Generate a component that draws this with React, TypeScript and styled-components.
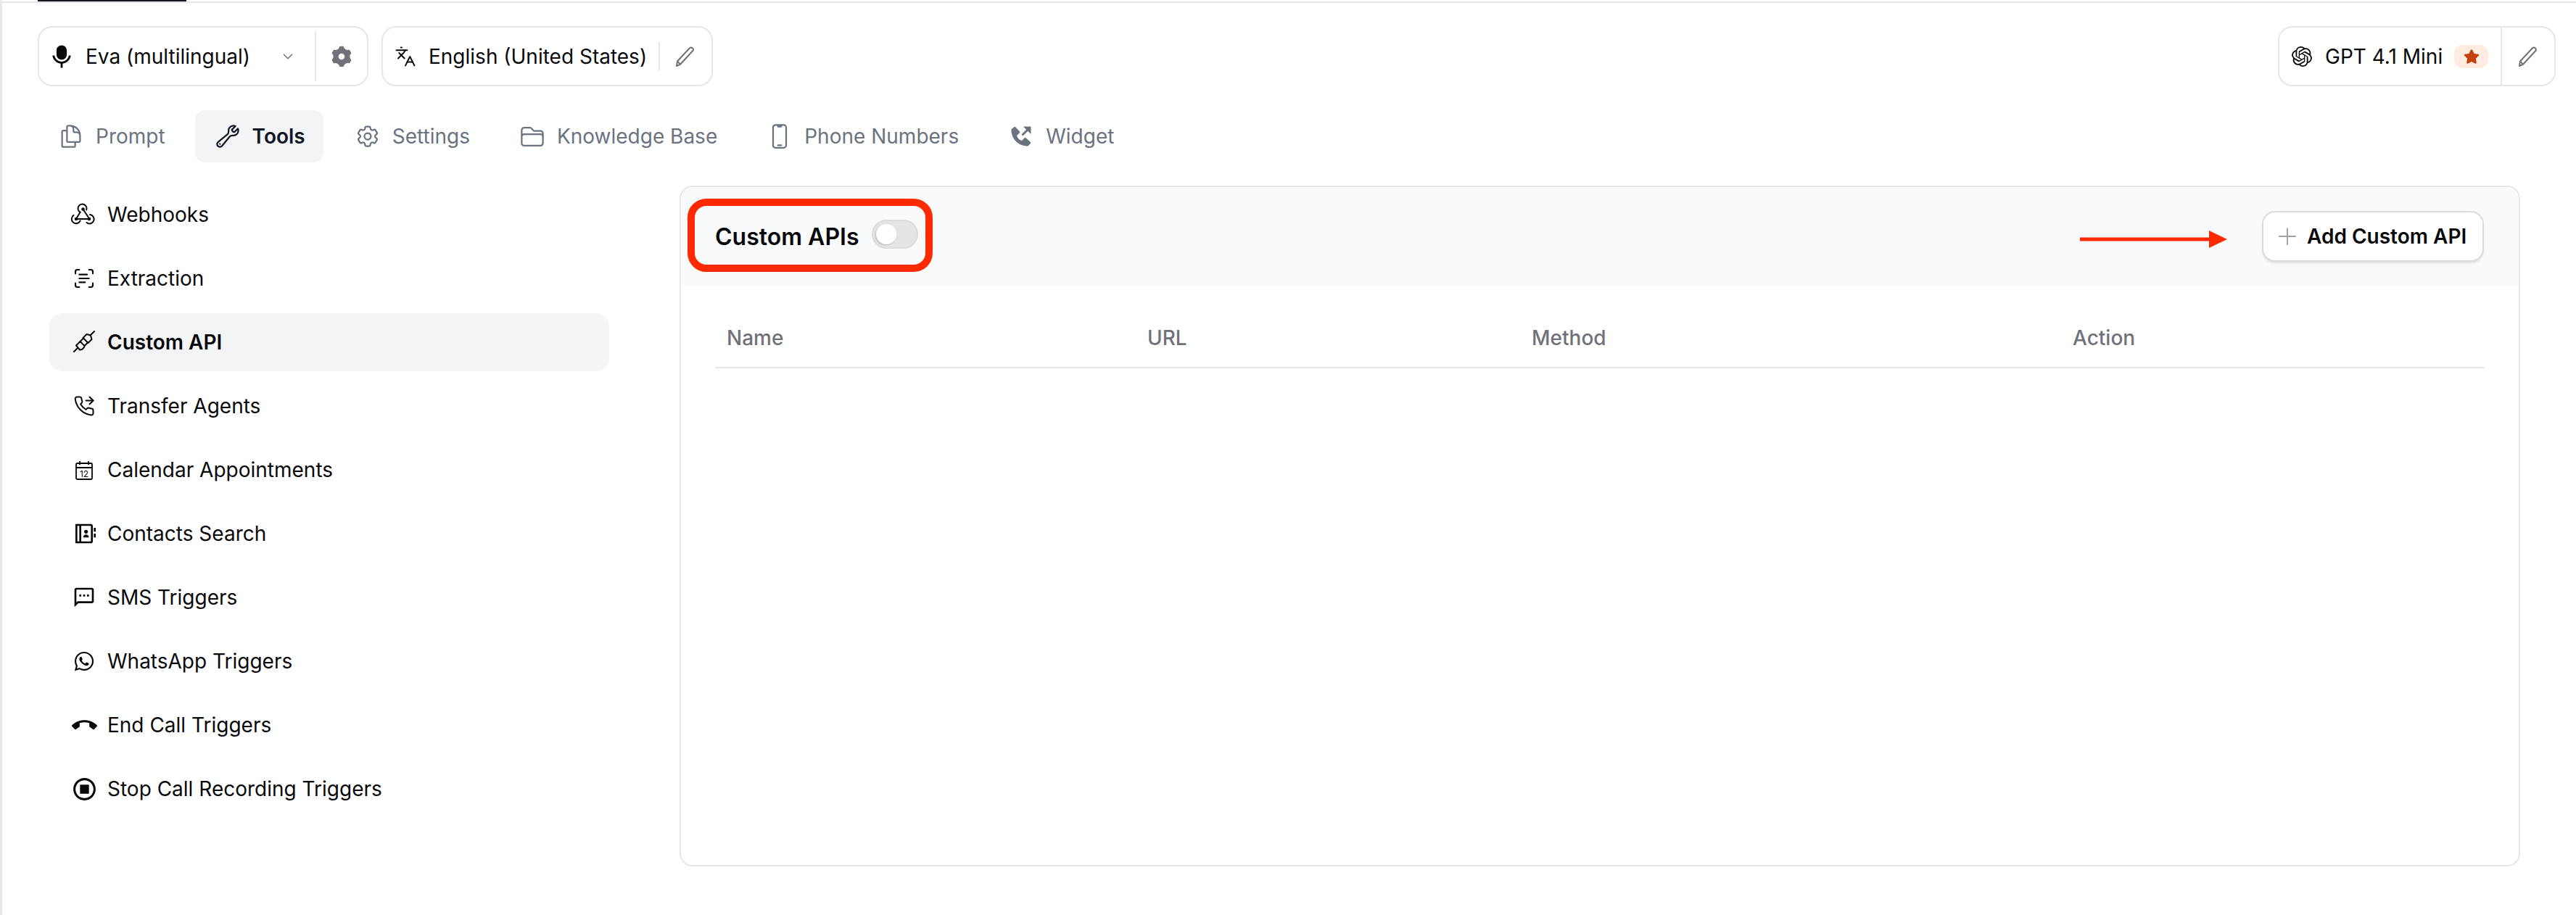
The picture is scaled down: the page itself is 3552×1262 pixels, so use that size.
import React from "react";
import styled, { createGlobalStyle } from "styled-components";
import { BiSolidPhoneOutgoing } from "react-icons/bi";
import { FaStar, FaWhatsapp } from "react-icons/fa";
import {
  HiOutlineCog6Tooth,
  HiOutlineDevicePhoneMobile,
  HiOutlineDocumentDuplicate,
  HiOutlineFolder,
  HiOutlineWrench,
} from "react-icons/hi2";
import { LuChevronDown, LuLanguages, LuPhoneForwarded, LuPlus, LuScanText } from "react-icons/lu";
import { MdCallEnd, MdOutlineSms, MdOutlineStopCircle } from "react-icons/md";
import { RiContactsBookLine, RiMicFill, RiSettings3Fill } from "react-icons/ri";
import { SiOpenai } from "react-icons/si";

const GlobalStyle = createGlobalStyle`
  html, body {
    margin: 0;
    background: #fff;
    overflow: hidden;
  }
  * {
    box-sizing: border-box;
  }
`;

const Page = styled.div`
  width: 3552px;
  height: 1262px;
  border-left: 3px solid #e8e8ec;
  font-family: Inter, "Liberation Sans", sans-serif;
  font-size: 28px;
  color: #09090b;
  background: #fff;
`;

const TopRule = styled.div`
  height: 4px;
  border-bottom: 2px solid #e6e6ee;
`;

const TopRuleMark = styled.div`
  margin-left: 49px;
  width: 205px;
  height: 2px;
  background: #18181b;
`;

const Toolbar = styled.div`
  display: flex;
  gap: 18px;
  height: 83px;
  margin-top: 32px;
  padding: 0 28px 0 49px;
`;

const Pill = styled.div<{ $width: number; $push?: boolean }>`
  display: flex;
  align-items: center;
  width: ${(p) => p.$width}px;
  height: 83px;
  margin-left: ${(p) => (p.$push ? "auto" : "0")};
  border: 2px solid #e7e7eb;
  border-radius: 20px;
`;

const PillIcon = styled.span<{ $left: number; $gap: number; $size: number }>`
  display: flex;
  flex: none;
  margin-left: ${(p) => p.$left}px;
  margin-right: ${(p) => p.$gap}px;
  font-size: ${(p) => p.$size}px;
  color: #09090b;
`;

const PillText = styled.span`
  flex: none;
  line-height: 34px;
  white-space: nowrap;
`;

const PillChevron = styled.span`
  display: flex;
  margin-left: auto;
  margin-right: 26px;
  font-size: 22px;
  color: #71717a;
`;

const PillDivider = styled.span<{ $inset: number; $left?: number }>`
  flex: none;
  align-self: stretch;
  width: 2px;
  margin: ${(p) => p.$inset}px 0;
  margin-left: ${(p) => p.$left ?? 0}px;
  background: #e7e7eb;
`;

const PillAction = styled.span<{ $width: number; $size: number }>`
  display: flex;
  flex: none;
  align-items: center;
  justify-content: center;
  width: ${(p) => p.$width}px;
  color: #71717a;
  font-size: ${(p) => p.$size}px;
`;

const StarBadge = styled.span`
  display: flex;
  align-items: center;
  justify-content: center;
  flex: none;
  width: 47px;
  height: 32px;
  margin-left: 16px;
  border-radius: 12px;
  background: #ffebe0;
  color: #c2410c;
  font-size: 22px;
`;

const Tabs = styled.nav`
  display: flex;
  gap: 16px;
  height: 72px;
  margin-top: 33px;
  padding-left: 50px;
`;

const Tab = styled.div<{ $active?: boolean }>`
  display: flex;
  align-items: center;
  gap: 16px;
  padding: 0 25px 0 27px;
  border-radius: 14px;
  background: ${(p) => (p.$active ? "#f3f4f6" : "transparent")};
  color: ${(p) => (p.$active ? "#111827" : "#6b7280")};
  font-weight: ${(p) => (p.$active ? 600 : 400)};
  white-space: nowrap;
`;

const TabIcon = styled.span<{ $size: number }>`
  display: flex;
  align-items: center;
  justify-content: center;
  width: 36px;
  font-size: ${(p) => p.$size}px;
`;

const Main = styled.div`
  display: flex;
  gap: 97px;
  margin-top: 32px;
  padding-left: 65px;
`;

const Sidebar = styled.aside`
  display: flex;
  flex-direction: column;
  gap: 8px;
  width: 772px;
`;

const SideItem = styled.div<{ $active?: boolean }>`
  display: flex;
  align-items: center;
  gap: 16px;
  height: 80px;
  padding-left: 32px;
  border-radius: 18px;
  background: ${(p) => (p.$active ? "#f3f4f6" : "transparent")};
  font-weight: ${(p) => (p.$active ? 600 : 400)};
`;

const SideIcon = styled.span<{ $size: number }>`
  display: flex;
  align-items: center;
  justify-content: center;
  width: 32px;
  height: 32px;
  font-size: ${(p) => p.$size}px;

  svg {
    flex: none;
  }
`;

const Panel = styled.section`
  width: 2538px;
  height: 939px;
  border: 2px solid #e7e7eb;
  border-radius: 18px;
  overflow: hidden;
`;

const PanelHeader = styled.header`
  display: flex;
  align-items: center;
  height: 136px;
  padding: 0 48px 0 9px;
  background: #f9fafb;
`;

const Highlight = styled.div`
  display: flex;
  align-items: center;
  gap: 18px;
  height: 101px;
  margin-bottom: 3px;
  padding: 0 10px 0 28px;
  border: 10px solid #ff2a00;
  border-radius: 26px;
`;

const PanelTitle = styled.h2`
  margin: 4px 0 0;
  font-size: 32px;
  font-weight: 600;
  line-height: 40px;
  white-space: nowrap;
`;

const Toggle = styled.span`
  display: flex;
  align-items: center;
  width: 64px;
  height: 40px;
  margin-top: -4px;
  padding-left: 4px;
  border: 2px solid #dcdce0;
  border-radius: 20px;
  background: #e4e4e7;
`;

const ToggleKnob = styled.span`
  width: 28px;
  height: 28px;
  border-radius: 50%;
  background: #fff;
  box-shadow: -1px 1px 2px rgba(0, 0, 0, 0.2);
`;

const Arrow = styled.svg`
  flex: none;
  margin-left: auto;
  margin-top: 8px;
  margin-right: 48px;
`;

const AddButton = styled.button`
  display: flex;
  align-items: center;
  gap: 8px;
  width: 306px;
  height: 70px;
  padding: 0 0 0 14px;
  border: 2px solid #dcdce0;
  border-radius: 18px;
  background: #fff;
  box-shadow: 0 2px 3px rgba(0, 0, 0, 0.1);
  color: #09090b;
  font-family: inherit;
  font-size: 28px;
  font-weight: 600;
  white-space: nowrap;
`;

const PlusIcon = styled.span`
  display: flex;
  color: #a1a1aa;
  font-size: 38px;
`;

const TableHead = styled.div`
  display: grid;
  grid-template-columns: 580px 530px 746px 1fr;
  align-items: center;
  height: 84px;
  margin: 30px 47px 0;
  border-bottom: 2px solid #e7e7eb;
`;

const HeadCell = styled.div`
  padding: 2px 0 0 16px;
  color: #71717a;
  font-weight: 500;
`;

const Pencil = () => (
  <svg width="28" height="30" viewBox="0 0 28 30" fill="none" stroke="currentColor" strokeWidth="2" strokeLinejoin="round">
    <path d="M3 21.5 20 3.2a2.6 2.6 0 0 1 3.7 0l.4.4a2.6 2.6 0 0 1 0 3.6L7 25.8l-5 2.2Z" />
    <path d="M3 21.5 7 25.8" />
  </svg>
);

const WebhookIcon = () => (
  <svg width="45" height="40" viewBox="0 0 45 40" fill="none" stroke="currentColor" strokeWidth="2" strokeLinecap="round">
    <path d="M16.5 16.7A6 6 0 1 1 25.2 13.5" />
    <path d="M20.5 12.5 29 25.5M16.5 16.7 11 26M11 26h18" />
    <path d="M7.5 20.8A6.2 6.2 0 1 0 16.6 28.5" />
    <path d="M25.5 31A6.2 6.2 0 1 0 30 20" />
    <circle cx="20.5" cy="12.5" r="1.3" fill="currentColor" />
    <circle cx="11" cy="26" r="1.3" fill="currentColor" />
    <circle cx="29" cy="26" r="1.3" fill="currentColor" />
  </svg>
);

const PlugIcon = () => (
  <svg width="45" height="40" viewBox="0 0 45 40" fill="none" stroke="currentColor" strokeWidth="2" strokeLinejoin="round" strokeLinecap="round">
    <path d="M8 33 13 28M30.5 10.5 36 5" />
    <path d="M11 24.5 16.5 19 22.5 25 22 27 19 30 16 30.5Z" />
    <path d="M20.5 14 25.5 9 31 10.5 32.5 16 27.5 21Z" />
    <path d="M16.5 19 20.5 15M22.5 25 26.5 21" />
  </svg>
);

const CalendarIcon = () => (
  <svg width="26" height="27" viewBox="0 0 26 27" fill="none" stroke="currentColor" strokeWidth="1.8">
    <rect x="2" y="4" width="22" height="22" rx="1.5" />
    <path d="M2 10h22M7 1v5M19 1v5" />
    <text x="13" y="23" textAnchor="middle" fontSize="12" fontFamily="Inter" fill="currentColor" stroke="none">
      12
    </text>
  </svg>
);

const tabs = [
  { label: "Prompt", size: 48, icon: <HiOutlineDocumentDuplicate /> },
  { label: "Tools", size: 44, icon: <HiOutlineWrench />, active: true },
  { label: "Settings", size: 40, icon: <HiOutlineCog6Tooth /> },
  { label: "Knowledge Base", size: 43, icon: <HiOutlineFolder /> },
  { label: "Phone Numbers", size: 48, icon: <HiOutlineDevicePhoneMobile /> },
  { label: "Widget", size: 40, icon: <BiSolidPhoneOutgoing /> },
];

const tools = [
  { label: "Webhooks", size: 36, icon: <WebhookIcon /> },
  { label: "Extraction", size: 32, icon: <LuScanText strokeWidth={1.6} /> },
  { label: "Custom API", size: 34, icon: <PlugIcon />, active: true },
  { label: "Transfer Agents", size: 30, icon: <LuPhoneForwarded strokeWidth={1.6} /> },
  { label: "Calendar Appointments", size: 28, icon: <CalendarIcon /> },
  { label: "Contacts Search", size: 32, icon: <RiContactsBookLine /> },
  { label: "SMS Triggers", size: 32, icon: <MdOutlineSms /> },
  { label: "WhatsApp Triggers", size: 30, icon: <FaWhatsapp /> },
  { label: "End Call Triggers", size: 35, icon: <MdCallEnd /> },
  { label: "Stop Call Recording Triggers", size: 37, icon: <MdOutlineStopCircle /> },
];

export default function App() {
  return (
    <Page>
      <GlobalStyle />
      <TopRule>
        <TopRuleMark />
      </TopRule>

      <Toolbar>
        <Pill $width={456}>
          <PillIcon $left={14} $gap={16} $size={34}>
            <RiMicFill />
          </PillIcon>
          <PillText>Eva (multilingual)</PillText>
          <PillChevron>
            <LuChevronDown strokeWidth={1.6} />
          </PillChevron>
          <PillDivider $inset={5} />
          <PillAction $width={70} $size={34}>
            <RiSettings3Fill />
          </PillAction>
        </Pill>
        <Pill $width={457}>
          <PillIcon $left={16} $gap={17} $size={30}>
            <LuLanguages strokeWidth={1.5} />
          </PillIcon>
          <PillText>English (United States)</PillText>
          <PillDivider $inset={20} $left={16} />
          <PillAction $width={70} $size={30}>
            <Pencil />
          </PillAction>
        </Pill>
        <Pill $width={383} $push>
          <PillIcon $left={17} $gap={18} $size={28}>
            <SiOpenai />
          </PillIcon>
          <PillText>GPT 4.1 Mini</PillText>
          <StarBadge>
            <FaStar />
          </StarBadge>
          <PillDivider $inset={0} $left={17} />
          <PillAction $width={71} $size={30}>
            <Pencil />
          </PillAction>
        </Pill>
      </Toolbar>

      <Tabs>
        {tabs.map((tab) => (
          <Tab key={tab.label} $active={tab.active}>
            <TabIcon $size={tab.size}>{tab.icon}</TabIcon>
            {tab.label}
          </Tab>
        ))}
      </Tabs>

      <Main>
        <Sidebar>
          {tools.map((tool) => (
            <SideItem key={tool.label} $active={tool.active}>
              <SideIcon $size={tool.size}>{tool.icon}</SideIcon>
              {tool.label}
            </SideItem>
          ))}
        </Sidebar>

        <Panel>
          <PanelHeader>
            <Highlight>
              <PanelTitle>Custom APIs</PanelTitle>
              <Toggle>
                <ToggleKnob />
              </Toggle>
            </Highlight>
            <Arrow width="203" height="24" viewBox="0 0 203 24">
              <path d="M0 9.5h178V0l25 12-25 12v-9.5H0Z" fill="#ff2a00" />
            </Arrow>
            <AddButton>
              <PlusIcon>
                <LuPlus strokeWidth={1.2} />
              </PlusIcon>
              Add Custom API
            </AddButton>
          </PanelHeader>
          <TableHead>
            <HeadCell>Name</HeadCell>
            <HeadCell>URL</HeadCell>
            <HeadCell>Method</HeadCell>
            <HeadCell>Action</HeadCell>
          </TableHead>
        </Panel>
      </Main>
    </Page>
  );
}
